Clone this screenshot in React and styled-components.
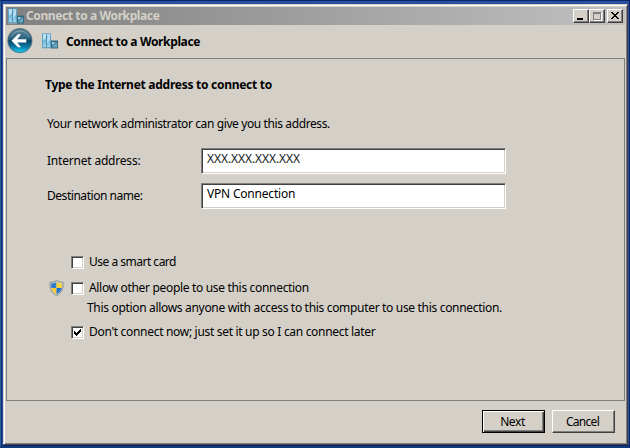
import { useState } from "react";
import styled, { createGlobalStyle } from "styled-components";

const GlobalStyle = createGlobalStyle`
    * {
        box-sizing: border-box;
    }
    body {
        margin: 0;
        overflow: hidden;
    }
`
const Desktop = styled.div`
    width: 630px;
    height: 448px;
    padding: 3px 1px 1px 2px;
    background-color: #2b50a0;
    border: solid #0a246a;
    border-width: 1px 1px 2px 1px;
    border-left-color: #2a6098;
    border-bottom-color: #12387c;
    box-shadow: inset 1px 0 0 #0c2a78, inset 0 -1px 0 #0a246a;
    font-family: "Noto Sans", "Liberation Sans", sans-serif;
    font-size: 12px;
    color: #000;
`
const Window = styled.div`
    display: flex;
    flex-direction: column;
    height: 100%;
    padding: 1px;
    background-color: #d4d0c8;
    border: 1px solid;
    border-color: #d4d0c8 #404040 #404040 #d4d0c8;
    box-shadow: inset 1px 1px 0 #fff, inset -1px -1px 0 #808080;
`
const TitleBar = styled.div`
    display: flex;
    align-items: center;
    height: 18px;
    margin: 1px 1px 0 1px;
    padding: 0 2px;
    background: linear-gradient(90deg, #808080, #c0c0c0);
`
const Label = styled.span`
    line-height: 16px;
    white-space: pre;
    font-weight: ${({$bold}) => $bold ? 700 : 400};
    letter-spacing: ${({$spacing}) => $spacing || 0}px;
`
const Caption = styled(Label)`
    flex: 1;
    margin-left: 2px;
    color: #d4d0c8;
`
const Raised = styled.button`
    display: flex;
    justify-content: center;
    align-items: center;
    padding: 0;
    border: 1px solid;
    border-color: #fff #404040 #404040 #fff;
    box-shadow: inset -1px -1px 0 #808080;
    background-color: #d4d0c8;
    color: #000;
    font-family: inherit;
    font-size: 12px;
`
const CaptionButton = styled(Raised)`
    width: 16px;
    height: 14px;
    margin-left: ${({$gap}) => $gap || 0}px;
`
const Header = styled.div`
    display: flex;
    align-items: center;
    height: 33px;
    padding-left: 2px;
`
const HeaderTitle = styled(Label)`
    margin-left: 8px;
`
const HeaderIcon = styled.span`
    display: flex;
    margin: -1px 0 0 8px;
`
const Panel = styled.main`
    height: 343px;
    margin: 0 1px;
    padding: 18px 38px 0 38px;
    border: 1px solid #808080;
`
const Intro = styled.div`
    display: flex;
    flex-direction: column;
    gap: 23px;
    margin-bottom: 16px;
`
const Hint = styled(Label)`
    margin-left: 2px;
`
const Field = styled.label`
    display: grid;
    grid-template-columns: 154px 305px;
    align-items: center;
    height: 26px;
    margin: 0 0 9px 2px;
`
const TextBox = styled.input`
    width: 305px;
    height: 26px;
    padding: 0 3px 5px 5px;
    border: 1px solid;
    border-color: #808080 #fff #fff #808080;
    box-shadow: inset 1px 1px 0 #404040, inset -1px -1px 0 #d4d0c8;
    border-radius: 0;
    outline: none;
    background-color: #fff;
    color: ${({$faded}) => $faded ? '#202020' : '#000'};
    font-family: inherit;
    font-size: 12px;
    letter-spacing: ${({$spacing}) => $spacing || 0}px;
`
const Options = styled.div`
    padding-top: 31px;
`
const Option = styled.label`
    display: flex;
    align-items: center;
    height: 26px;
    padding-left: 4px;
`
const ShieldSlot = styled.span`
    display: flex;
    width: 22px;
`
const Box = styled.span`
    display: flex;
    justify-content: center;
    align-items: center;
    width: 13px;
    height: 13px;
    margin-right: 5px;
    border: 1px solid;
    border-color: #808080 #fff #fff #808080;
    box-shadow: inset 1px 1px 0 #404040, inset -1px -1px 0 #d4d0c8;
    background-color: #fff;
`
const HiddenCheck = styled.input`
    position: absolute;
    opacity: 0;
    pointer-events: none;
`
const Note = styled.div`
    display: flex;
    height: 18px;
    padding-left: 42px;
    align-items: flex-start;
    ${Label} {
        line-height: 13px;
    }
`
const Footer = styled.footer`
    display: flex;
    justify-content: flex-end;
    gap: 7px;
    padding: 9px 11px 0 0;
`
const PushButton = styled(Raised)`
    width: 63px;
    height: 23px;
    padding: 0 2px 0 0;
    ${({$primary}) => $primary && `
        border-color: #000;
        box-shadow: inset 1px 1px 0 #fff, inset -1px -1px 0 #404040, inset -2px -2px 0 #808080;
    `}
`

function Buildings() {
    return (
        <svg width="16" height="16" viewBox="0 0 16 16">
            <defs>
                <linearGradient id="glass" x1="0" y1="0" x2="0" y2="1">
                    <stop offset="0" stopColor="#b5dff0"/>
                    <stop offset=".5" stopColor="#6fb6d9"/>
                    <stop offset="1" stopColor="#a3d6ea"/>
                </linearGradient>
                <linearGradient id="annex" x1="0" y1="0" x2="1" y2="1">
                    <stop offset="0" stopColor="#3b7594"/>
                    <stop offset="1" stopColor="#79bcd6"/>
                </linearGradient>
            </defs>
            <path d="M0 .5H9V15H0Z" fill="#4a93ba"/>
            <path d="M.7 1H4V14H.7Z" fill="url(#glass)"/>
            <path d="M5 1H8.300V14H5Z" fill="url(#glass)"/>
            <path d="M1 3L4 1V5L1 8ZM5 6L8 2V7L5 10Z" fill="#d3eef8" fillOpacity=".65"/>
            <path d="M0 14.500H9V15.500H0Z" fill="#8fb4c4"/>
            <path d="M9 7.500H16V15.500H9Z" fill="#34687f"/>
            <path d="M10 9H15V14.500H10Z" fill="url(#annex)"/>
            <path d="M10 9H12V11H10Z" fill="#9ed2e5"/>
        </svg>
    )
}

function BackOrb() {
    return (
        <svg width="27" height="27" viewBox="0 0 27 27">
            <defs>
                <linearGradient id="orb" x1="0" y1="0" x2="0" y2="1">
                    <stop offset="0" stopColor="#668b9e"/>
                    <stop offset=".43" stopColor="#24617f"/>
                    <stop offset=".5" stopColor="#064466"/>
                    <stop offset=".75" stopColor="#087ba5"/>
                    <stop offset="1" stopColor="#19d4f5"/>
                </linearGradient>
                <linearGradient id="ring" x1="0" y1="0" x2="0" y2="1">
                    <stop offset="0" stopColor="#777f85"/>
                    <stop offset="1" stopColor="#b7bcbe"/>
                </linearGradient>
            </defs>
            <circle cx="12.9" cy="12.8" r="12.8" fill="url(#ring)"/>
            <circle cx="12.9" cy="12.8" r="11.8" fill="url(#orb)" stroke="#335d75" strokeWidth=".7"/>
            <path d="M4 9C7 1.500 19 1 22 9" fill="none" stroke="#a5bbc5" strokeOpacity=".5"/>
            <path d="M4.500 12.800L11 6.300H14L10.300 11.200H19.300V14.400H10.300L14 19.300H11Z" fill="#fff"/>
        </svg>
    )
}

function Shield() {
    return (
        <svg width="15" height="16" viewBox="0 0 15 16">
            <path d="M7.500 .5C9.500 1.700 11.700 2.300 14 2.200C14.600 8.500 12.600 13.300 7.500 15.500C2.400 13.300 .4 8.500 1 2.200C3.300 2.300 5.500 1.700 7.500 .5Z" fill="#ccd1d2" stroke="#7f8687" strokeWidth=".9"/>
            <path d="M7.500 2V8H2.200C2 6.500 2 5 2.200 3.500C4.200 3.400 6 3 7.500 2Z" fill="#347dce"/>
            <path d="M7.500 2V8H12.800C13 6.500 13 5 12.800 3.500C10.800 3.400 9 3 7.500 2Z" fill="#f8d340"/>
            <path d="M7.500 8V14.200C4.700 12.800 2.800 10.800 2.200 8Z" fill="#f5ca36"/>
            <path d="M7.500 8V14.200C10.300 12.800 12.200 10.800 12.800 8Z" fill="#2474cf"/>
        </svg>
    )
}

function CheckMark() {
    return (
        <svg width="7" height="7" viewBox="0 0 7 7" shapeRendering="crispEdges">
            <path d="M0 2H1V3H2V4H3V3H4V2H5V1H6V0H7V3H6V4H5V5H4V6H3V7H2V6H1V5H0Z" fill="#000"/>
        </svg>
    )
}

function CheckOption({text, spacing, shield, initial = false}) {
    const [checked, setChecked] = useState(initial);

    return (
        <Option>
            <ShieldSlot>{shield && <Shield />}</ShieldSlot>
            <HiddenCheck type="checkbox" checked={checked} onChange={() => setChecked(!checked)}/>
            <Box>{checked && <CheckMark />}</Box>
            <Label $spacing={spacing}>{text}</Label>
        </Option>
    )
}

export default function App() {
    const [address, setAddress] = useState('XXX.XXX.XXX.XXX');
    const [name, setName] = useState('VPN Connection');

    return (
        <Desktop>
            <GlobalStyle />
            <Window>
                <TitleBar>
                    <Buildings />
                    <Caption $bold $spacing={-0.39}>Connect to a Workplace</Caption>
                    <CaptionButton aria-label="Minimize">
                        <svg width="12" height="10" shapeRendering="crispEdges">
                            <path d="M2 7H8V9H2Z"/>
                        </svg>
                    </CaptionButton>
                    <CaptionButton aria-label="Maximize">
                        <svg width="12" height="10" shapeRendering="crispEdges">
                            <path d="M3 2H11V10H3Z" fill="#fff"/>
                            <path d="M2 1H10V9H2Z" fill="#808080"/>
                            <path d="M3 3H9V8H3Z" fill="#d4d0c8"/>
                        </svg>
                    </CaptionButton>
                    <CaptionButton $gap={2} aria-label="Close">
                        <svg width="12" height="10" shapeRendering="crispEdges">
                            <path d="M2 1H4V2H5V3H7V2H8V1H10V2H9V3H8V4H7V5H8V6H9V7H10V8H8V7H7V6H5V7H4V8H2V7H3V6H4V5H5V4H4V3H3V2H2Z"/>
                        </svg>
                    </CaptionButton>
                </TitleBar>
                <Header>
                    <BackOrb />
                    <HeaderIcon><Buildings /></HeaderIcon>
                    <HeaderTitle $bold $spacing={-0.36}>Connect to a Workplace</HeaderTitle>
                </Header>
                <Panel>
                    <Intro>
                        <Label $bold $spacing={-0.27}>Type the Internet address to connect to</Label>
                        <Hint $spacing={-0.39}>Your network administrator can give you this address.</Hint>
                    </Intro>
                    <Field>
                        <Label $spacing={-0.2}>Internet address:</Label>
                        <TextBox $faded $spacing={-0.07} value={address} onChange={(e) => setAddress(e.target.value)}/>
                    </Field>
                    <Field>
                        <Label $spacing={-0.46}>Destination name:</Label>
                        <TextBox $spacing={-0.2} value={name} onChange={(e) => setName(e.target.value)}/>
                    </Field>
                    <Options>
                        <CheckOption spacing={-0.5} text="Use a smart card"/>
                        <CheckOption spacing={-0.32} shield text="Allow other people to use this connection"/>
                        <Note>
                            <Label $spacing={-0.32}>This option allows anyone with access to this computer to use this connection.</Label>
                        </Note>
                        <CheckOption spacing={-0.31} initial text="Don't connect now; just set it up so I can connect later"/>
                    </Options>
                </Panel>
                <Footer>
                    <PushButton $primary><Label $spacing={-0.4}>Next</Label></PushButton>
                    <PushButton><Label $spacing={-0.7}>Cancel</Label></PushButton>
                </Footer>
            </Window>
        </Desktop>
    )
}
